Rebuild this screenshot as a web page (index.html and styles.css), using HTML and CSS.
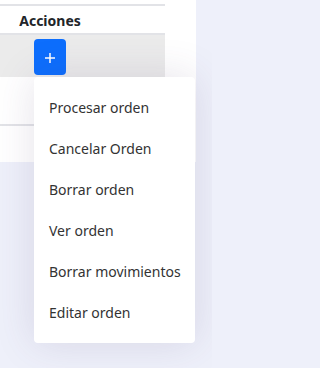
FILE: index.html
```html
<!DOCTYPE html>
<html lang="es">
<head>
<meta charset="utf-8">
<title>Acciones</title>
<link rel="stylesheet" href="styles.css">
</head>
<body>
<div class="page">
  <div class="card">
    <div class="tbl">
      <div class="thead">
        <div class="th col-actions">Acciones</div>
      </div>
      <div class="trow trow-hover">
        <div class="td col-actions">
          <div class="dropdown">
            <button class="btn-add" type="button" aria-label="Acciones">
              <svg width="12" height="12" viewBox="0 0 12 12" aria-hidden="true">
                <path d="M6 1v10M1 6h10" stroke="#ffffff" stroke-width="1.5" fill="none"/>
              </svg>
            </button>
            <ul class="menu">
              <li class="menu-item">Procesar orden</li>
              <li class="menu-item">Cancelar Orden</li>
              <li class="menu-item">Borrar orden</li>
              <li class="menu-item">Ver orden</li>
              <li class="menu-item">Borrar movimientos</li>
              <li class="menu-item">Editar orden</li>
            </ul>
          </div>
        </div>
      </div>
      <div class="trow trow-plain"></div>
    </div>
  </div>
</div>
</body>
</html>
```

FILE: styles.css
```css
* {
  box-sizing: border-box;
}

html, body {
  margin: 0;
  padding: 0;
}

body {
  background: #eef0fa;
  font-family: "Noto Sans", "Open Sans", sans-serif;
  color: #333333;
  width: 212px;
  height: 368px;
  overflow: hidden;
}

.page {
  width: 212px;
  height: 368px;
}

.card {
  width: 196px;
  height: 162px;
  background: #ffffff;
  padding-top: 4px;
}

.tbl {
  width: 165px;
  border-top: 2px solid #e2e3e7;
}

.thead {
  height: 29px;
  border-bottom: 2px solid #e2e3e7;
  display: flex;
  align-items: center;
}

.col-actions {
  width: 100px;
  display: flex;
  justify-content: center;
}

.th {
  font-weight: 700;
  font-size: 14px;
  color: #212529;
  padding-top: 1px;
}

.trow-hover {
  height: 42px;
  background: #ebebeb;
  display: flex;
}

.td {
  padding-top: 4px;
}

.dropdown {
  position: relative;
}

.btn-add {
  width: 32px;
  height: 36px;
  border: none;
  border-radius: 4px;
  background: #0d6efd;
  padding: 2px 0 0 0;
  margin: 0;
  display: flex;
  align-items: center;
  justify-content: center;
}

.btn-add svg {
  display: block;
}

.trow-plain {
  height: 49px;
  border-bottom: 2px solid #e2e3e7;
}

.menu {
  position: absolute;
  left: 0;
  top: 38px;
  width: 161px;
  margin: 0;
  padding: 10px 0;
  list-style: none;
  background: #ffffff;
  border-radius: 4px;
  box-shadow: 0 0 40px 0 rgba(82, 63, 105, 0.15);
  z-index: 10;
}

.menu-item {
  height: 41px;
  padding-left: 15px;
  display: flex;
  align-items: center;
  font-size: 14px;
  color: #333333;
  white-space: nowrap;
}
```
